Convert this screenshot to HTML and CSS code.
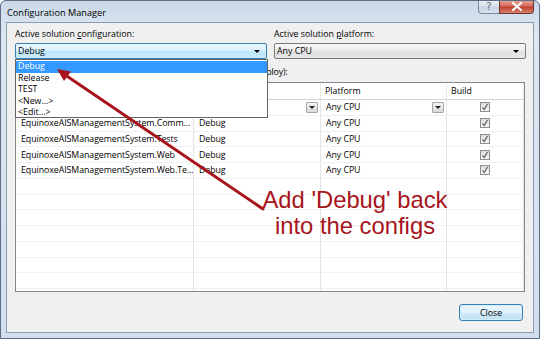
FILE: index.html
```html
<!DOCTYPE html>
<html lang="en">
<head>
    <meta charset="UTF-8">
    <meta name="viewport" content="width=device-width, initial-scale=1.0">
    <title>Configuration Manager</title>
    <link rel="stylesheet" href="styles.css">
</head>
<body>
    <div class="window">
        <div class="titlebar">
            <span class="title">Configuration Manager</span>
            <div class="caption-buttons">
                <span class="cap-btn help">?</span>
                <span class="cap-btn close">
                    <svg width="12" height="9" viewBox="0 0 12 9"><path d="M2 1 L10 8 M10 1 L2 8" stroke="#fff" stroke-width="2.2" stroke-linecap="round"/></svg>
                </span>
            </div>
        </div>

        <div class="client">
            <div class="top-row">
                <div class="field">
                    <label>Active solution <u>c</u>onfiguration:</label>
                    <div class="combo open">Debug</div>
                    <ul class="droplist">
                        <li class="selected">Debug</li>
                        <li>Release</li>
                        <li>TEST</li>
                        <li>&lt;New...&gt;</li>
                        <li>&lt;Edit...&gt;</li>
                    </ul>
                </div>
                <div class="field">
                    <label>Active solution <u>p</u>latform:</label>
                    <div class="combo">Any CPU</div>
                </div>
            </div>

            <div class="contexts-label">Project contexts (check the project configurations to build or deploy):</div>

            <div class="grid">
                <div class="hcell">Project</div>
                <div class="hcell">Configuration</div>
                <div class="hcell">Platform</div>
                <div class="hcell">Build</div>

                <div class="cell">EquinoxeAISManagementSystem</div>
                <div class="cell with-btn">Debug<span class="mini-btn"></span></div>
                <div class="cell with-btn">Any CPU<span class="mini-btn"></span></div>
                <div class="cell check"><span class="checkbox"><svg width="8" height="8" viewBox="0 0 8 8"><path d="M1.5 4.5 L3.2 6.5 L6.5 1" fill="none" stroke="#555" stroke-width="1.1"/></svg></span></div>

                <div class="cell">EquinoxeAISManagementSystem.Comm...</div>
                <div class="cell">Debug</div>
                <div class="cell">Any CPU</div>
                <div class="cell check"><span class="checkbox"><svg width="8" height="8" viewBox="0 0 8 8"><path d="M1.5 4.5 L3.2 6.5 L6.5 1" fill="none" stroke="#555" stroke-width="1.1"/></svg></span></div>

                <div class="cell">EquinoxeAISManagementSystem.Tests</div>
                <div class="cell">Debug</div>
                <div class="cell">Any CPU</div>
                <div class="cell check"><span class="checkbox"><svg width="8" height="8" viewBox="0 0 8 8"><path d="M1.5 4.5 L3.2 6.5 L6.5 1" fill="none" stroke="#555" stroke-width="1.1"/></svg></span></div>

                <div class="cell">EquinoxeAISManagementSystem.Web</div>
                <div class="cell">Debug</div>
                <div class="cell">Any CPU</div>
                <div class="cell check"><span class="checkbox"><svg width="8" height="8" viewBox="0 0 8 8"><path d="M1.5 4.5 L3.2 6.5 L6.5 1" fill="none" stroke="#555" stroke-width="1.1"/></svg></span></div>

                <div class="cell">EquinoxeAISManagementSystem.Web.Te...</div>
                <div class="cell">Debug</div>
                <div class="cell">Any CPU</div>
                <div class="cell check"><span class="checkbox"><svg width="8" height="8" viewBox="0 0 8 8"><path d="M1.5 4.5 L3.2 6.5 L6.5 1" fill="none" stroke="#555" stroke-width="1.1"/></svg></span></div>

                <div class="cell"></div><div class="cell"></div><div class="cell"></div><div class="cell"></div>
                <div class="cell"></div><div class="cell"></div><div class="cell"></div><div class="cell"></div>
                <div class="cell"></div><div class="cell"></div><div class="cell"></div><div class="cell"></div>
                <div class="cell"></div><div class="cell"></div><div class="cell"></div><div class="cell"></div>
                <div class="cell"></div><div class="cell"></div><div class="cell"></div><div class="cell"></div>
                <div class="cell"></div><div class="cell"></div><div class="cell"></div><div class="cell"></div>
                <div class="cell"></div><div class="cell"></div><div class="cell"></div><div class="cell"></div>
                <div class="cell"></div><div class="cell"></div><div class="cell"></div><div class="cell"></div>
            </div>

            <div class="footer">
                <button class="btn">Close</button>
            </div>
        </div>

        <!-- annotation -->
        <svg class="arrow" width="540" height="339" viewBox="0 0 540 339">
            <path d="M263 209 L66 75.5" stroke="#a8141c" stroke-width="3" stroke-linecap="round"/>
            <polygon points="57,69 71,71.5 64,81" fill="#a8141c"/>
        </svg>
        <div class="note">Add 'Debug' back<br>into the configs</div>
    </div>
</body>
</html>
```

FILE: styles.css
```css
body {
    margin: 0;
    font-family: "Open Sans", "Noto Sans", sans-serif;
    font-size: 8.8px;
    color: #000;
}

.window {
    position: relative;
    width: 540px;
    height: 339px;
    box-sizing: border-box;
    border: 1px solid #5d6e84;
    border-radius: 6px 6px 0 0;
    background: linear-gradient(#c9d7e7, #dde7f2 30px, #d2dfed);
    padding: 0 5px 5px 5px;
    display: flex;
    flex-direction: column;
    overflow: hidden;
}

/* title bar */
.titlebar {
    height: 21px;
    display: flex;
    justify-content: space-between;
    align-items: flex-start;
}
.title {
    padding: 5px 0 0 1px;
    font-size: 9.2px;
}
.caption-buttons {
    display: flex;
    margin-top: -1px;
}
.cap-btn {
    height: 14px;
    box-sizing: border-box;
    display: flex;
    align-items: center;
    justify-content: center;
}
.help {
    width: 21px;
    border: 1px solid #7b8899;
    border-top: none;
    border-right: none;
    border-radius: 0 0 0 4px;
    background: linear-gradient(#eef2f7, #d3dde9 50%, #c6d3e2 51%, #d9e3ee);
    color: #5b6878;
    font-size: 10px;
    font-family: "DejaVu Sans", sans-serif;
}
.close {
    width: 35px;
    border: 1px solid #6e3630;
    border-top: none;
    border-radius: 0 0 4px 0;
    background: linear-gradient(#e9ab9c, #d46b5b 45%, #c1412f 55%, #d6826e);
}

/* client area */
.client {
    flex: 1;
    border: 1px solid #8c9db3;
    background: #f0f0f0;
    padding: 6px 7px 0 8px;
    display: flex;
    flex-direction: column;
}

.top-row {
    display: grid;
    grid-template-columns: 252px 252px;
    column-gap: 7px;
}
.field {
    position: relative;
}
.field label {
    display: block;
    line-height: 11px;
    height: 11px;
}
.combo {
    position: relative;
    margin-top: 3px;
    height: 16px;
    box-sizing: border-box;
    border: 1px solid #7a7a7a;
    border-radius: 2px;
    background: linear-gradient(#f6f6f6, #ececec 50%, #e1e1e1 51%, #e6e6e6);
    padding-left: 2px;
    line-height: 14px;
}
.combo::after {
    content: "";
    position: absolute;
    right: 6px;
    top: 6px;
    border-left: 3px solid transparent;
    border-right: 3px solid transparent;
    border-top: 3px solid #000;
}
.combo.open {
    border-color: #3c7fb1;
    background: linear-gradient(#eaf6fd, #d9f0fc 50%, #bee6fd 51%, #c8e9fb);
}

.droplist {
    position: absolute;
    top: 100%;
    left: 0;
    width: 253px;
    margin: 0;
    padding: 1px 0 0 0;
    list-style: none;
    box-sizing: border-box;
    height: 59px;
    background: #fff;
    border: 1px solid #646464;
    z-index: 2;
}
.droplist li {
    height: 11.5px;
    line-height: 11.5px;
    padding-left: 2px;
}
.droplist li.selected {
    background: #3399ff;
    color: #fff;
}

.contexts-label {
    margin-top: 8px;
    line-height: 11px;
    height: 11px;
    white-space: nowrap;
    letter-spacing: -0.13px;
}

/* project grid */
.grid {
    margin-top: 4px;
    margin-right: 1px;
    height: 210px;
    box-sizing: border-box;
    border: 1px solid #828790;
    background: #fff;
    display: grid;
    grid-template-columns: 178px 127px 126px 77px;
    grid-template-rows: 17px;
    grid-auto-rows: 15.75px;
    overflow: hidden;
}
.hcell {
    display: flex;
    align-items: center;
    padding-left: 4px;
    border-right: 1px solid #e6e9ee;
    border-bottom: 1px solid #d5d5d5;
    white-space: nowrap;
    overflow: hidden;
}
.cell {
    position: relative;
    display: flex;
    align-items: center;
    padding-left: 5px;
    border-right: 1px solid #e4e4e4;
    border-bottom: 1px solid #f0f0f0;
    white-space: nowrap;
    overflow: hidden;
    letter-spacing: -0.06px;
}
.cell.check {
    justify-content: center;
    padding-left: 0;
}
.mini-btn {
    position: absolute;
    right: 2px;
    top: 2px;
    width: 12px;
    height: 11px;
    box-sizing: border-box;
    border: 1px solid #a5a5a5;
    border-radius: 1px;
    background: linear-gradient(#f4f4f4, #dadada);
}
.mini-btn::after {
    content: "";
    position: absolute;
    left: 2px;
    top: 3px;
    border-left: 3px solid transparent;
    border-right: 3px solid transparent;
    border-top: 3px solid #222;
}
.checkbox {
    width: 10px;
    height: 10px;
    box-sizing: border-box;
    border: 1px solid #8e8f8f;
    background: linear-gradient(#dcdcdc, #f6f6f6);
    display: flex;
    align-items: center;
    justify-content: center;
}

.footer {
    margin-top: 12px;
    display: flex;
    justify-content: flex-end;
    padding-right: 3px;
}
.btn {
    width: 64px;
    height: 17px;
    padding: 0;
    font-family: inherit;
    font-size: 8.8px;
    border: 1px solid #3c7fb1;
    border-radius: 3px;
    background: linear-gradient(#eaf6fd, #e2f2fc 50%, #cfe9f9 51%, #bfe1f5);
    box-shadow: inset 0 0 0 1px #d5ecfb;
    color: #000;
}

/* annotation */
.arrow {
    position: absolute;
    left: -1px;
    top: -1px;
    z-index: 3;
}
.note {
    position: absolute;
    left: 254px;
    top: 186px;
    width: 200px;
    text-align: center;
    font-family: "Liberation Sans", Arial, sans-serif;
    font-size: 23.8px;
    line-height: 26px;
    color: #a8141c;
    z-index: 3;
}
```
